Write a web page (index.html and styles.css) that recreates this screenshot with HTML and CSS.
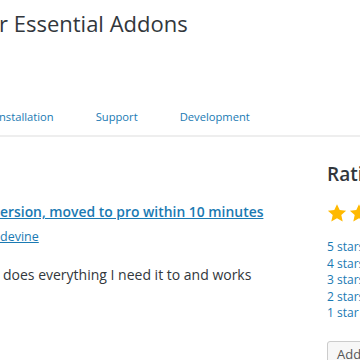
FILE: index.html
```html
<!DOCTYPE html>
<html lang="en">
<head>
    <meta charset="UTF-8">
    <meta name="viewport" content="width=device-width, initial-scale=1.0">
    <title>Essential Addons</title>
    <link rel="stylesheet" href="styles.css">
</head>
<body>
    <div class="page">
        <h1 class="plugin-title">r Essential Addons</h1>

        <div class="tabs">
            <a class="tab tab-first" href="#">nstallation</a>
            <a class="tab" href="#">Support</a>
            <a class="tab" href="#">Development</a>
        </div>

        <div class="columns">
            <div class="main">
                <div class="review">
                    <a class="review-title" href="#">ersion, moved to pro within 10 minutes</a>
                    <a class="review-author" href="#">devine</a>
                    <p class="review-text">does everything I need it to and works</p>
                </div>
            </div>

            <div class="sidebar">
                <h3 class="side-title">Ratings</h3>
                <div class="stars">
                    <svg class="star" viewBox="0 0 20 20"><path d="M10 1.2l2.7 5.9 6.4.7-4.8 4.3 1.4 6.3L10 15.2l-5.7 3.2 1.4-6.3L.9 7.8l6.4-.7z"/></svg>
                    <svg class="star" viewBox="0 0 20 20"><path d="M10 1.2l2.7 5.9 6.4.7-4.8 4.3 1.4 6.3L10 15.2l-5.7 3.2 1.4-6.3L.9 7.8l6.4-.7z"/></svg>
                    <svg class="star" viewBox="0 0 20 20"><path d="M10 1.2l2.7 5.9 6.4.7-4.8 4.3 1.4 6.3L10 15.2l-5.7 3.2 1.4-6.3L.9 7.8l6.4-.7z"/></svg>
                </div>
                <ul class="counts">
                    <li><a href="#">5 stars</a></li>
                    <li><a href="#">4 stars</a></li>
                    <li><a href="#">3 stars</a></li>
                    <li><a href="#">2 stars</a></li>
                    <li><a href="#">1 star</a></li>
                </ul>
                <button class="add-review">Add my review</button>
            </div>
        </div>
    </div>
</body>
</html>
```

FILE: styles.css
```css
html, body {
    margin: 0;
    padding: 0;
}
body {
    font-family: 'Open Sans', sans-serif;
    color: #32373c;
    background: #ffffff;
    width: 360px;
    height: 360px;
    overflow: hidden;
}
a {
    color: #1a7ab3;
}
.page {
    width: 600px;
}
.plugin-title {
    font-size: 22px;
    font-weight: 400;
    line-height: 30px;
    margin: 8px 0 0 -1px;
    white-space: nowrap;
}
.tabs {
    display: flex;
    margin-top: 71px;
    padding-bottom: 10px;
    border-bottom: 2px solid #eeeeee;
    width: 360px;
}
.tab {
    font-size: 11.2px;
    line-height: 16px;
    text-decoration: none;
    margin-right: 42px;
}
.tab-first {
    margin-left: -1px;
}
.columns {
    display: flex;
}
.main {
    width: 327px;
    flex: none;
}
.review {
    padding-top: 63px;
}
.review-title {
    display: block;
    font-size: 13.9px;
    font-weight: 600;
    line-height: 24px;
    white-space: nowrap;
}
.review-author {
    display: inline-block;
    font-size: 12.5px;
    line-height: 24px;
}
.review-text {
    font-size: 14px;
    line-height: 24px;
    margin: 14px 0 0 3px;
    white-space: nowrap;
}
.sidebar {
    width: 220px;
    flex: none;
}
.side-title {
    font-size: 19px;
    font-weight: 600;
    line-height: 24px;
    margin: 25px 0 0;
}
.stars {
    display: flex;
    gap: 2px;
    margin-top: 17px;
}
.star {
    width: 20px;
    height: 20px;
    fill: #ffb900;
}
.counts {
    list-style: none;
    margin: 16px 0 0;
    padding: 0;
}
.counts li {
    font-size: 12px;
    line-height: 16.5px;
    white-space: nowrap;
}
.counts a {
    text-decoration: none;
}
.add-review {
    margin-top: 19px;
    font-family: 'Open Sans', sans-serif;
    font-size: 13px;
    color: #555;
    background: #f7f7f7;
    border: 1px solid #cccccc;
    border-radius: 3px;
    padding: 3px 9px;
    box-shadow: 0 1px 0 #cccccc;
}
```
